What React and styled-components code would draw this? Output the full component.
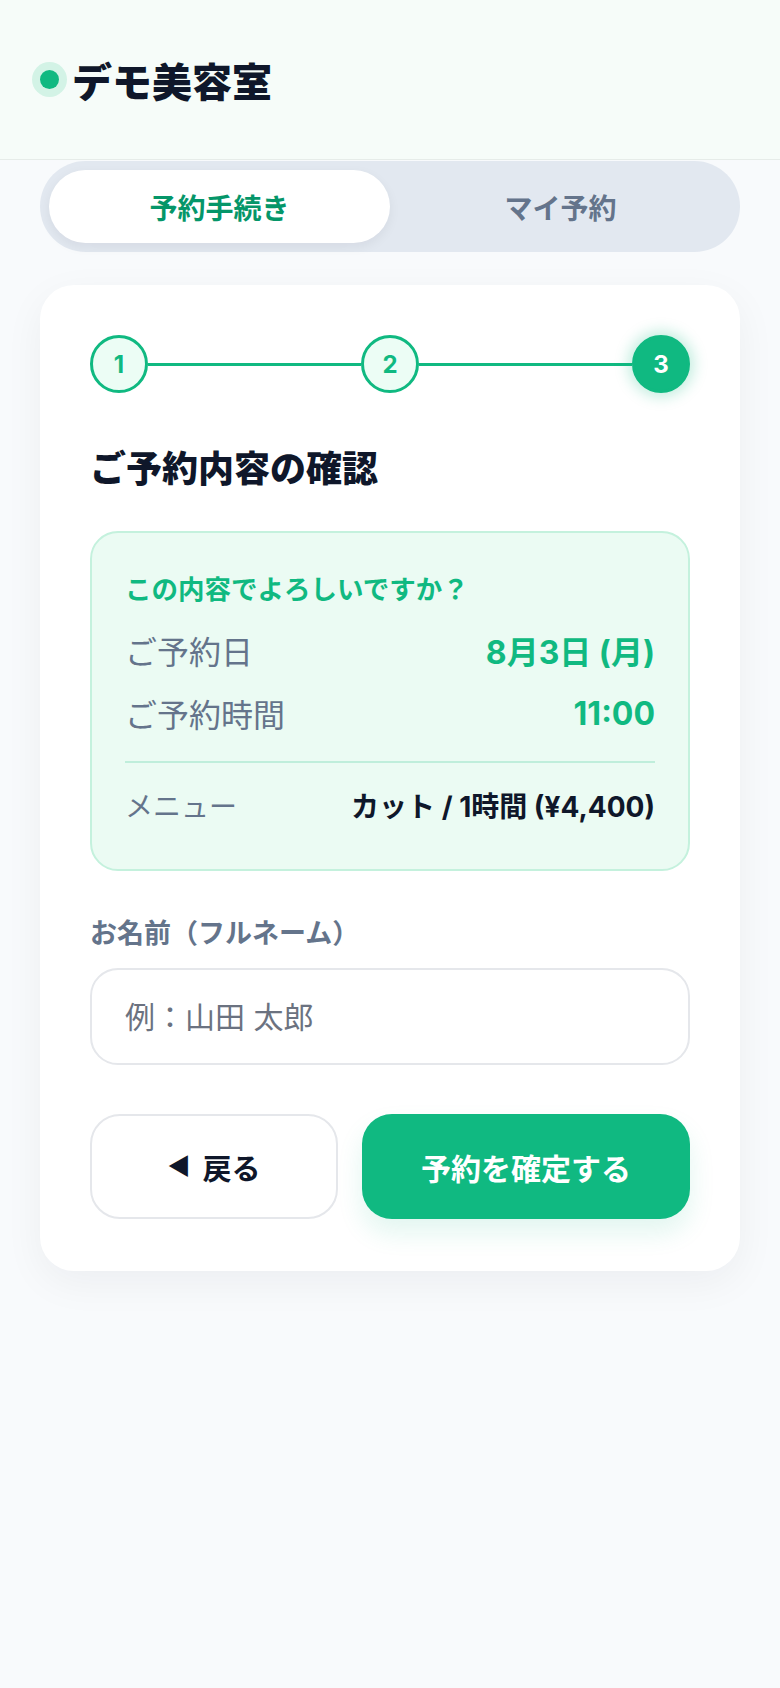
import React from 'react'
import styled, { createGlobalStyle } from 'styled-components'

const green = '#10b981'
const ink = '#0f172a'
const slate = '#64748b'

const GlobalStyle = createGlobalStyle`
  body {
    margin: 0;
    background: #f8fafc;
    font-family: Inter, "Noto Sans CJK JP", sans-serif;
    color: ${ink};
  }
  * { box-sizing: border-box; }
`

const Page = styled.div`
  min-height: 1688px;
  background: #f8fafc;
`

const Header = styled.header`
  height: 160px;
  display: flex;
  align-items: center;
  padding-left: 40px;
  background: #f6fcf9;
  border-bottom: 1px solid #e6ece9;
`

const Dot = styled.span`
  width: 19px;
  height: 19px;
  border-radius: 50%;
  background: ${green};
  box-shadow: 0 0 0 8px #d3f3e6;
  margin-right: 13px;
`

const Brand = styled.h1`
  margin: 0;
  font-size: 40px;
  font-weight: 800;
`

const Main = styled.main`
  padding: 0 40px;
  margin-top: 1px;
`

const Tabs = styled.div`
  display: grid;
  grid-template-columns: 1fr 1fr;
  padding: 9px;
  border-radius: 46px;
  background: #e2e8f0;
`

const Tab = styled.button`
  height: 73px;
  border: none;
  border-radius: 37px;
  font-family: inherit;
  font-size: 28px;
  font-weight: 700;
  background: ${p => (p.$active ? '#fff' : 'transparent')};
  color: ${p => (p.$active ? '#059669' : slate)};
  box-shadow: ${p => (p.$active ? '0 4px 12px rgba(15,23,42,0.06)' : 'none')};
`

const Card = styled.section`
  margin-top: 33px;
  background: #fff;
  border-radius: 34px;
  padding: 50px 50px 52px;
  box-shadow: 0 12px 40px rgba(15, 23, 42, 0.05);
`

const Stepper = styled.div`
  display: flex;
  align-items: center;
`

const Step = styled.div`
  width: 58px;
  height: 58px;
  flex: none;
  border-radius: 50%;
  display: flex;
  align-items: center;
  justify-content: center;
  border: 3px solid ${green};
  background: ${p => (p.$current ? green : '#ecfdf5')};
  color: ${p => (p.$current ? '#fff' : green)};
  font-size: 24px;
  font-weight: 700;
  box-shadow: ${p => (p.$current ? '0 0 14px 4px rgba(16,185,129,0.25)' : 'none')};
`

const Line = styled.div`
  flex: 1;
  height: 3px;
  background: ${green};
`

const Title = styled.h2`
  margin: 54px 0 0;
  font-size: 36px;
  line-height: 44px;
  font-weight: 800;
`

const Summary = styled.div`
  margin-top: 40px;
  padding: 40px 33px 44px;
  border: 2px solid #c4f1dd;
  border-radius: 28px;
  background: #ebfbf3;
`

const Ask = styled.p`
  margin: 0;
  font-size: 26.5px;
  line-height: 32px;
  font-weight: 700;
  color: ${green};
`

const Row = styled.div`
  display: flex;
  justify-content: space-between;
  align-items: center;
  margin-top: ${p => p.$gap}px;
  height: 40px;
`

const Key = styled.span`
  font-size: ${p => (p.$small ? 28 : 32)}px;
  color: ${slate};
`

const Value = styled.span`
  font-size: ${p => (p.$dark ? 28 : 32)}px;
  font-weight: 700;
  color: ${p => (p.$dark ? ink : green)};
`

const Rule = styled.hr`
  margin: 28px 0 0;
  border: none;
  height: 2px;
  background: #bfeedb;
`

const Label = styled.label`
  display: block;
  margin-top: 49px;
  font-size: 27px;
  line-height: 28px;
  font-weight: 700;
  color: ${slate};
`

const Input = styled.input`
  display: block;
  width: 100%;
  height: 97px;
  margin-top: 20px;
  padding: 0 33px;
  border: 2px solid #e5e7eb;
  border-radius: 28px;
  font-family: inherit;
  font-size: 30px;
  color: ${ink};
  background: #fff;
  &::placeholder { color: #6b7280; }
`

const Actions = styled.div`
  display: grid;
  grid-template-columns: 248px 1fr;
  gap: 24px;
  margin-top: 49px;
`

const Button = styled.button`
  height: 105px;
  border-radius: 30px;
  font-family: inherit;
  font-weight: 700;
  border: ${p => (p.$primary ? 'none' : '2px solid #e5e7eb')};
  background: ${p => (p.$primary ? green : '#fff')};
  color: ${p => (p.$primary ? '#fff' : ink)};
  font-size: ${p => (p.$primary ? 30 : 29)}px;
  box-shadow: ${p => (p.$primary ? '0 14px 26px rgba(16,185,129,0.12)' : 'none')};
  display: flex;
  align-items: center;
  justify-content: center;
  gap: 12px;
`

const Arrow = styled.span`
  font-size: 24px;
`

export default function App() {
  return (
    <Page>
      <GlobalStyle />
      <Header>
        <Dot />
        <Brand>デモ美容室</Brand>
      </Header>
      <Main>
        <Tabs>
          <Tab $active>予約手続き</Tab>
          <Tab>マイ予約</Tab>
        </Tabs>
        <Card>
          <Stepper>
            <Step>1</Step>
            <Line />
            <Step>2</Step>
            <Line />
            <Step $current>3</Step>
          </Stepper>
          <Title>ご予約内容の確認</Title>
          <Summary>
            <Ask>この内容でよろしいですか？</Ask>
            <Row $gap={25}>
              <Key>ご予約日</Key>
              <Value>8月3日 (月)</Value>
            </Row>
            <Row $gap={23}>
              <Key>ご予約時間</Key>
              <Value>11:00</Value>
            </Row>
            <Rule />
            <Row $gap={22}>
              <Key $small>メニュー</Key>
              <Value $dark>カット / 1時間 (¥4,400)</Value>
            </Row>
          </Summary>
          <Label htmlFor="name">お名前（フルネーム）</Label>
          <Input id="name" placeholder="例：山田 太郎" />
          <Actions>
            <Button>
              <Arrow>◀</Arrow>戻る
            </Button>
            <Button $primary>予約を確定する</Button>
          </Actions>
        </Card>
      </Main>
    </Page>
  )
}
